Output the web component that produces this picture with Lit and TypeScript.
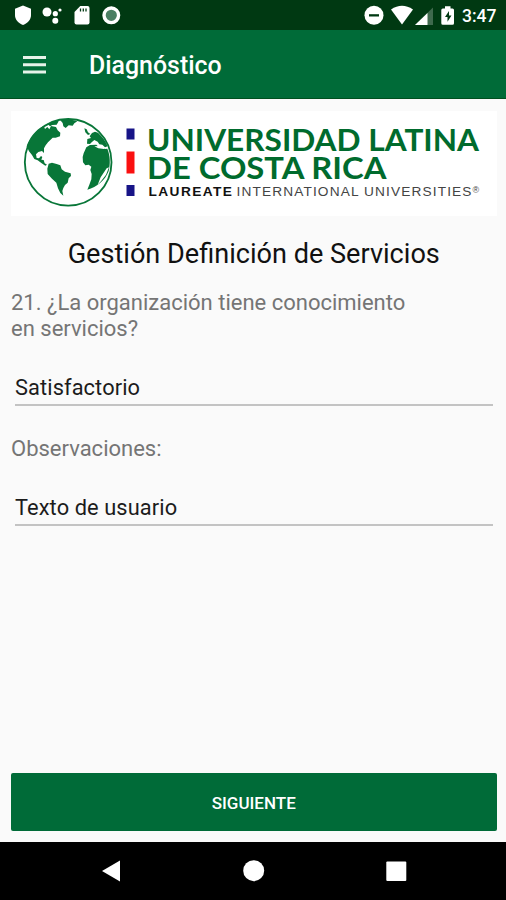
import { LitElement, html, css, svg } from "lit";
import { customElement, property } from "lit/decorators.js";

@customElement("status-bar")
class StatusBar extends LitElement {
  static styles = css`
    :host { display: block; height: 30px; background: #003912; }
    svg { display: block; }
    .time { font: 500 18.5px Roboto, sans-serif; fill: #fff; }
  `;
  render() {
    return html`<svg width="506" height="30" viewBox="0 0 506 30" fill="#fff">
      <path d="M23 5.5l8 3.2v6.3c0 4.500-3.200 8.200-8 10-4.800-1.800-8-5.500-8-10V8.700z" />
      <circle cx="47" cy="12" r="4.500" /><circle cx="55.300" cy="13.700" r="2.600" />
      <circle cx="60" cy="10" r="1.600" /><circle cx="55.300" cy="20.700" r="3" />
      <path d="M80.300 6h7.200a2 2 0 0 1 2 2v14.500a2 2 0 0 1-2 2H76.500a2 2 0 0 1-2-2V12z" />
      <path d="M80.500 8.500v3M83.300 8.500v3M86 8.500v3" stroke="#003912" stroke-width="1.300" />
      <circle cx="111.300" cy="15.300" r="7.300" fill="#4b7f63" stroke="#fff" stroke-width="3.400" />
      <circle cx="374" cy="15.300" r="9.500" /><path d="M369 14.200h10v2.300h-10z" fill="#003912" />
      <path d="M391 9.500q11-7.500 22 0L402 24.500z" />
      <path d="M433 7.500V25h-18z" fill="#3f6a4d" /><path d="M427.500 12.900V25h-12.500z" />
      <path d="M445 6.200h5.500v2.300h2a1.500 1.500 0 0 1 1.500 1.500v13.300a1.500 1.500 0 0 1-1.500 1.500h-9.700a1.500 1.500 0 0 1-1.500-1.500V10a1.500 1.500 0 0 1 1.500-1.500H445z" />
      <path d="M449 11l-4 6h2.500v4.700l4-6.200H449z" fill="#003912" />
      <text class="time" x="462" y="22.300" textLength="34.500" lengthAdjust="spacingAndGlyphs">3:47</text>
    </svg>`;
  }
}

@customElement("university-logo")
class UniversityLogo extends LitElement {
  static styles = css`
    :host { display: block; height: 105px; background: #fff; }
    svg { display: block; }
    .name { font: 700 30.600px Lato, sans-serif; fill: #006b2d; }
    .network { font: 400 13.700px "Liberation Sans", sans-serif; fill: #444; }
    .strong { font-weight: 700; fill: #111; }
    .mark { font-size: 9px; }
  `;
  private globe() {
    return svg`<g transform="translate(10 105) scale(.33333)" fill="#087638">
      <path d="M50 124C58 98 76 75 101 62L105 72 112 66 118 73 123 63 138 66 143 76 151 83 150 94 137 98 128 98 121 105 114 112 107 121 102 130 102 144 96 138 85 141 78 148 80 159 87 160 93 153 97 156 94 164 101 165 104 175 111 179 106 182 95 175 83 166 73 162 66 150 57 139Z" />
      <path d="M112 56L139 47 146 49 140 59 127 60 120 64ZM151 46L176 42 202 49 193 55 188 62 176 61 167 69 160 64 158 54Z" />
      <path d="M116 176L126 173 140 177 151 181 155 193 165 200 182 205 183 213 176 220 173 233 165 240 160 249 157 258 160 272 151 264 144 250 139 233 126 221 113 207 112 191Z" />
      <path d="M229 127L240 120 259 119 266 126 278 128 285 132 292 131C301 153 301 176 296 198C286 225 261 247 232 254L238 239 244 223 245 207 241 195 244 185 236 179 226 181 219 172 218 156 221 145Z" />
      <path d="M231 116L232 102 243 99 239 94 246 84 255 80 264 83C278 96 286 107 293 124L285 127 277 119 268 118 263 110 253 105 245 112 240 117Z" />
      <path d="M223 70L230 73 234 82 241 87 234 90 226 82Z" />
      <path d="M253 124L268 123 284 128 282 132 265 130ZM297 187L290 190 272 217 263 239 273 229 288 209Z" fill="#fff" />
      <circle cx="174.500" cy="172" r="130" fill="none" stroke="#087638" stroke-width="5.500" />
    </g>`;
  }
  render() {
    return html`<svg width="486" height="105" viewBox="11 111 486 105">
      ${this.globe()}
      <path d="M126.500 128.500h8v11h-8zM126.500 185h8v11h-8z" fill="#171487" />
      <path d="M126.500 151.500h8v22h-8z" fill="#fa1010" />
      <text class="name" x="147" y="151.300" textLength="332" lengthAdjust="spacingAndGlyphs">UNIVERSIDAD LATINA</text>
      <text class="name" x="147" y="179.300" textLength="239.500" lengthAdjust="spacingAndGlyphs">DE COSTA RICA</text>
      <text class="network strong" x="148.500" y="195.700" textLength="83.500">LAUREATE</text>
      <text class="network" x="236.500" y="195.700" textLength="235">INTERNATIONAL UNIVERSITIES</text>
      <text class="network mark" x="472.500" y="192.500">®</text>
    </svg>`;
  }
}

@customElement("text-field")
class TextField extends LitElement {
  @property() value = "";
  static styles = css`
    :host {
      display: block; box-sizing: border-box; height: 33px; margin: 0 4px;
      border-bottom: 2px solid #c3c3c3;
      font: 400 21.800px/30px Roboto, sans-serif; color: #1c1c1c; letter-spacing: .1px;
    }
  `;
  render() { return html`${this.value}`; }
}

@customElement("app-root")
class AppRoot extends LitElement {
  static styles = css`
    :host {
      display: flex; flex-direction: column; height: 900px; width: 506px; overflow: hidden;
      background: #fafafa; font-family: Roboto, sans-serif;
    }
    .toolbar {
      box-sizing: border-box; height: 69px; flex: none; display: flex; align-items: center;
      padding: 1px 23px 0; gap: 43px; background: #006b38; color: #fff; border-bottom: 1px solid #00501f;
    }
    .menu { display: block; }
    .title { margin: 2px 0 0; font-size: 24.900px; font-weight: 500; }
    .content { flex: 1; display: flex; flex-direction: column; padding: 12px 9.500px 11px 11px; }
    .heading { margin: 21px 0 0; font-size: 27.100px; line-height: 34px; font-weight: 400; text-align: center; color: #111; }
    .label { margin: 0; font-size: 22px; line-height: 26px; color: #757575; }
    .question { margin-top: 19px; max-width: 420px; }
    .answer { margin-top: 31px; }
    .notes { margin-top: 30px; }
    .next {
      margin-top: auto; height: 58.500px; border: 0; border-radius: 2px; background: #006b38;
      color: #fff; font: 500 17px Roboto, sans-serif; padding: 2px 0 0;
    }
    .navigation { height: 58px; flex: none; background: #000; }
    .navigation svg { display: block; }
  `;
  render() {
    return html`
      <status-bar></status-bar>
      <header class="toolbar">
        <svg class="menu" width="23" height="18" viewBox="0 0 23 18" fill="#e6f3e9"><path d="M0 0h23v3H0zM0 7.300h23v3H0zM0 14.500h23v3H0z" /></svg>
        <h1 class="title">Diagnóstico</h1>
      </header>
      <main class="content">
        <university-logo></university-logo>
        <h2 class="heading">Gestión Definición de Servicios</h2>
        <p class="label question">21. ¿La organización tiene conocimiento<br />en servicios?</p>
        <text-field class="answer" value="Satisfactorio"></text-field>
        <p class="label notes">Observaciones:</p>
        <text-field class="answer" value="Texto de usuario"></text-field>
        <button class="next">SIGUIENTE</button>
      </main>
      <nav class="navigation">
        <svg width="506" height="58" viewBox="0 842 506 58" fill="#fff">
          <path d="M102 871L120 860.500V881.500z" />
          <circle cx="253.700" cy="870.700" r="10.500" />
          <rect x="386.300" y="861.500" width="20" height="19.500" rx="1" />
        </svg>
      </nav>`;
  }
}
